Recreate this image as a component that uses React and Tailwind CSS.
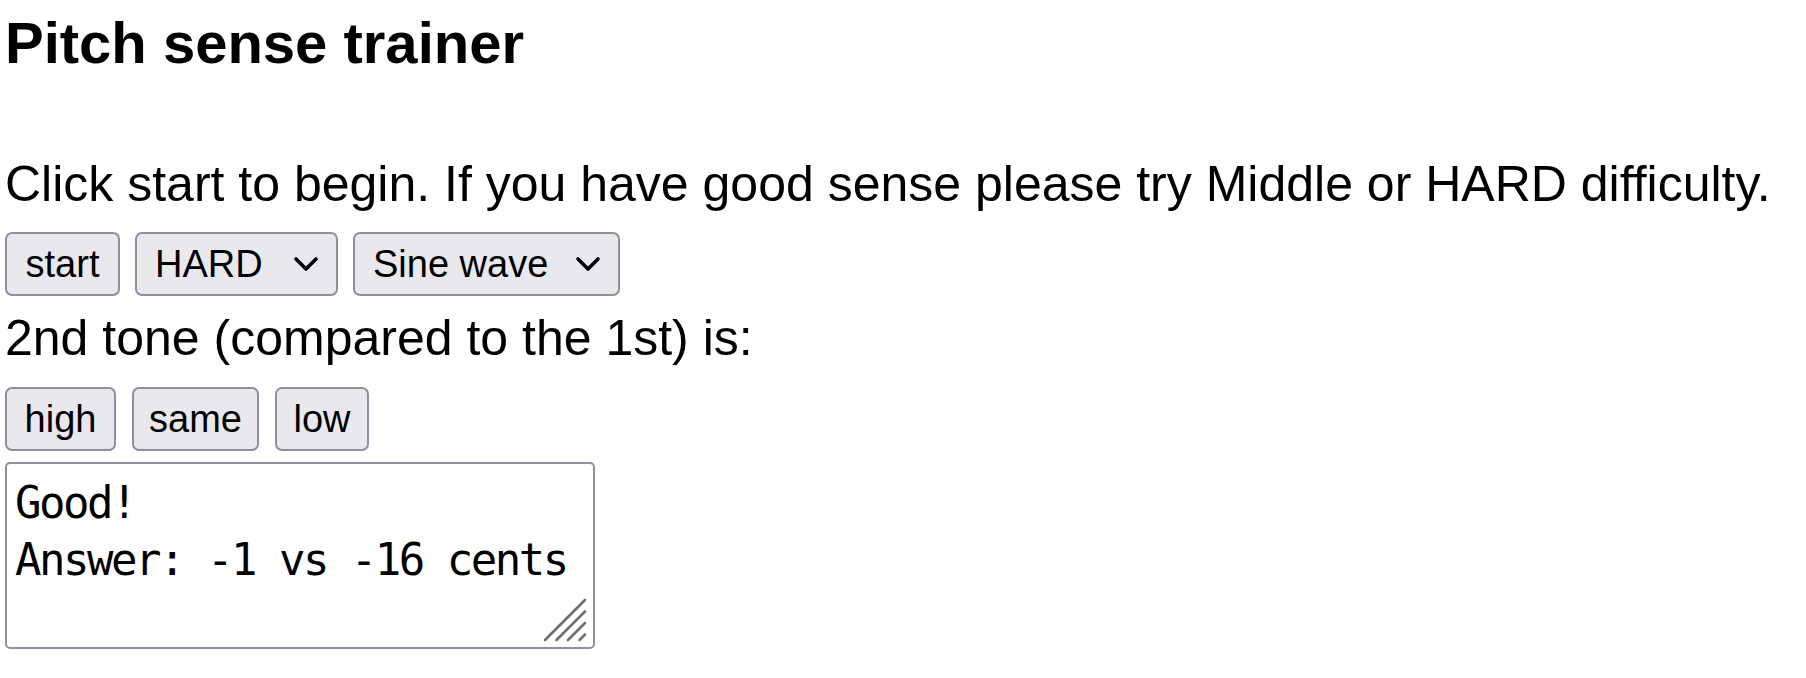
import React from "react";

const sans = "font-['Liberation_Sans',Arial,sans-serif]";

const Chevron = () => (
  <svg
    width="26"
    height="17"
    viewBox="0 0 26 17"
    fill="none"
    className="pointer-events-none absolute right-[19px] top-1/2 -translate-y-1/2"
  >
    <path d="M3 3.5L13 13.5L23 3.5" stroke="#000" strokeWidth="3.6" strokeLinecap="round" strokeLinejoin="round" />
  </svg>
);

const Btn = ({ width, children }) => (
  <button
    type="button"
    className={`${sans} ${width} flex h-[64px] items-center justify-center rounded-[7px] border-2 border-[#8f8f9d] bg-[#e9e9ed] text-[38px] leading-none text-black`}
  >
    {children}
  </button>
);

const Select = ({ width, value, options }) => (
  <div className={`relative ${width}`}>
    <select
      defaultValue={value}
      className={`${sans} h-[64px] w-full appearance-none rounded-[7px] border-2 border-[#8f8f9d] bg-[#e9e9ed] pl-[18px] pr-[50px] text-[38px] leading-none text-black`}
    >
      {options.map((o) => (
        <option key={o}>{o}</option>
      ))}
    </select>
    <Chevron />
  </div>
);

// textarea resize grip, drawn over the corner
const Grip = () => (
  <svg
    width="44"
    height="44"
    viewBox="0 0 44 44"
    className="pointer-events-none absolute right-[8px] bottom-[7px]"
  >
    {[2, 13.5, 25, 36.5].map((s) => (
      <line key={s} x1={s} y1="42" x2="42" y2={s} stroke="#707070" strokeWidth="2.6" strokeLinecap="round" />
    ))}
  </svg>
);

export default function App() {
  return (
    <div className={`${sans} min-h-screen bg-white px-[5px] text-black`}>
      <h1 className="mt-[11px] text-[58px] font-bold leading-[64px]">Pitch sense trainer</h1>

      <p className="mt-[80px] text-[50px] leading-[58px]">
        Click start to begin. If you have good sense please try Middle or HARD difficulty.
      </p>

      <div className="mt-[19px] flex gap-[15px]">
        <Btn width="w-[115px]">start</Btn>
        <Select width="w-[203px]" value="HARD" options={["EASY", "Middle", "HARD"]} />
        <Select width="w-[267px]" value="Sine wave" options={["Sine wave", "Square wave"]} />
      </div>

      <p className="mt-[13px] text-[50px] leading-[58px]">2nd tone (compared to the 1st) is:</p>

      <div className="mt-[20px] flex gap-[16px]">
        <Btn width="w-[111px]">high</Btn>
        <Btn width="w-[127px]">same</Btn>
        <Btn width="w-[94px]">low</Btn>
      </div>

      <div className="relative mt-[11px] h-[187px] w-[590px]">
        <textarea
          readOnly
          defaultValue={"Good!\nAnswer: -1 vs -16 cents"}
          className="h-full w-full resize-none rounded-[5px] border-2 border-[#8f8f9d] bg-white px-[8px] pt-[10px] font-['DejaVu_Sans_Mono',monospace] text-[44px] leading-[57px] tracking-[-2.5px] text-black outline-none"
        />
        <Grip />
      </div>
    </div>
  );
}
